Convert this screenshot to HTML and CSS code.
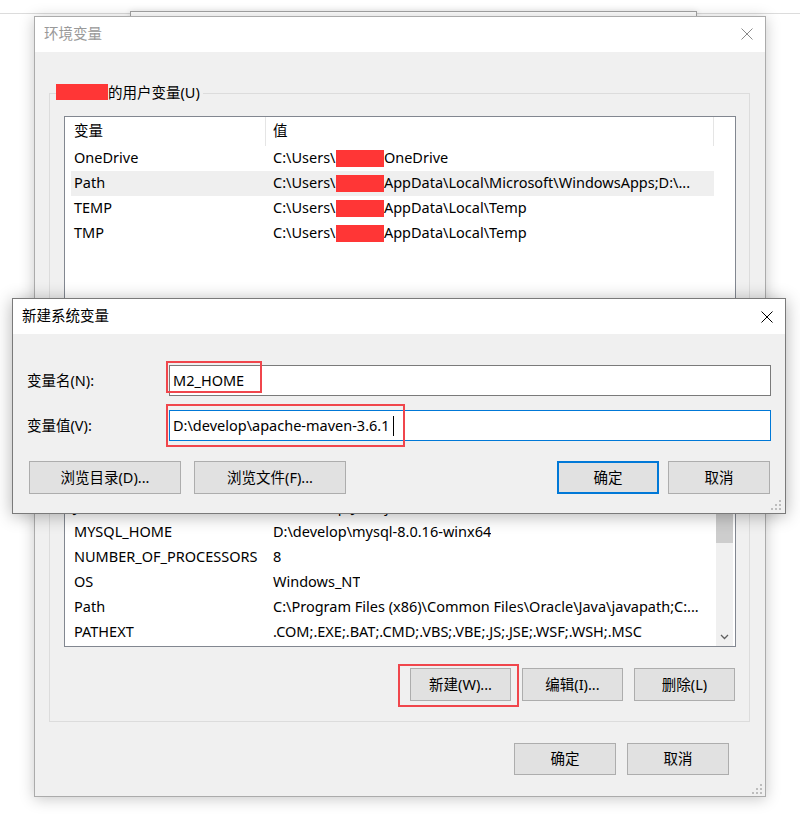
FILE: index.html
```html
<!DOCTYPE html>
<html lang="zh-CN">
<head>
<meta charset="utf-8">
<title>环境变量</title>
<link rel="stylesheet" href="styles.css">
</head>
<body>
<div class="desk-line"></div>
<div class="back-window"></div>

<section class="window main-win">
  <header class="titlebar">
    <span class="title">环境变量</span>
    <svg class="close" viewBox="0 0 12 12"><path d="M0.5 0.5L11.5 11.5M11.5 0.5L0.5 11.5" stroke="#8a8a8a" stroke-width="1" fill="none"/></svg>
  </header>
  <div class="win-body">
    <div class="group">
      <div class="legend"><span class="redact lg"></span>的用户变量(U)</div>
      <div class="list user-list">
        <div class="list-head"><div class="hcol1">变量</div><div class="hcol2">值</div></div>
        <div class="row"><div class="c1">OneDrive</div><div class="c2">C:\Users\<span class="redact sm"></span>\OneDrive</div></div>
        <div class="row sel"><div class="c1">Path</div><div class="c2">C:\Users\<span class="redact sm"></span>\AppData\Local\Microsoft\WindowsApps;D:\...</div></div>
        <div class="row"><div class="c1">TEMP</div><div class="c2">C:\Users\<span class="redact sm"></span>\AppData\Local\Temp</div></div>
        <div class="row"><div class="c1">TMP</div><div class="c2">C:\Users\<span class="redact sm"></span>\AppData\Local\Temp</div></div>
      </div>
      <div class="list sys-list">
        <div class="sys-main">
          <div class="sys-head"></div>
          <div class="row"><div class="c1">JAVA_HOME</div><div class="c2">D:\develop\Java\jdk1.8.0_201</div></div>
          <div class="row"><div class="c1">MYSQL_HOME</div><div class="c2">D:\develop\mysql-8.0.16-winx64</div></div>
          <div class="row"><div class="c1">NUMBER_OF_PROCESSORS</div><div class="c2">8</div></div>
          <div class="row"><div class="c1">OS</div><div class="c2">Windows_NT</div></div>
          <div class="row"><div class="c1">Path</div><div class="c2">C:\Program Files (x86)\Common Files\Oracle\Java\javapath;C:...</div></div>
          <div class="row"><div class="c1">PATHEXT</div><div class="c2">.COM;.EXE;.BAT;.CMD;.VBS;.VBE;.JS;.JSE;.WSF;.WSH;.MSC</div></div>
        </div>
        <div class="vscroll">
          <div class="thumb"></div>
          <div class="arrow-down"><svg width="9" height="6" viewBox="0 0 9 6"><path d="M1 1L4.5 4.5L8 1" stroke="#606060" stroke-width="1.3" fill="none"/></svg></div>
        </div>
      </div>
      <div class="btn-row">
        <span class="marked"><button class="btn">新建(W)...</button></span>
        <button class="btn">编辑(I)...</button>
        <button class="btn">删除(L)</button>
      </div>
    </div>
    <div class="footer-btns">
      <button class="btn foot">确定</button>
      <button class="btn foot">取消</button>
    </div>
    <svg class="grip main-grip" viewBox="0 0 10 10"><rect x="8" y="0" width="2" height="2"/><rect x="4" y="4" width="2" height="2"/><rect x="8" y="4" width="2" height="2"/><rect x="0" y="8" width="2" height="2"/><rect x="4" y="8" width="2" height="2"/><rect x="8" y="8" width="2" height="2"/></svg>
  </div>
</section>

<section class="window dialog">
  <header class="titlebar">
    <span class="title">新建系统变量</span>
    <svg class="close" viewBox="0 0 12 12"><path d="M0.5 0.5L11.5 11.5M11.5 0.5L0.5 11.5" stroke="#000" stroke-width="1" fill="none"/></svg>
  </header>
  <div class="dlg-body">
    <div class="field">
      <label>变量名(N):</label>
      <div class="input">M2_HOME<span class="mark mark1"></span></div>
    </div>
    <div class="field">
      <label>变量值(V):</label>
      <div class="input focus">D:\develop\apache-maven-3.6.1<span class="caret"></span><span class="mark mark2"></span></div>
    </div>
    <div class="dlg-btns">
      <button class="btn wide">浏览目录(D)...</button>
      <button class="btn wide">浏览文件(F)...</button>
      <span class="spacer"></span>
      <button class="btn dlg default">确定</button>
      <button class="btn dlg">取消</button>
    </div>
    <svg class="grip dlg-grip" viewBox="0 0 10 10"><rect x="8" y="0" width="2" height="2"/><rect x="4" y="4" width="2" height="2"/><rect x="8" y="4" width="2" height="2"/><rect x="0" y="8" width="2" height="2"/><rect x="4" y="8" width="2" height="2"/><rect x="8" y="8" width="2" height="2"/></svg>
  </div>
</section>
</body>
</html>
```
FILE: styles.css
```css
*, *::before, *::after { box-sizing: border-box; }
html, body { margin: 0; padding: 0; }
body {
  width: 800px;
  height: 814px;
  position: relative;
  overflow: hidden;
  background: #fff;
  font-family: "Noto Sans", "Noto Sans CJK SC", sans-serif;
  font-size: 14.5px;
  color: #000;
}
.desk-line {
  position: absolute;
  left: 0; right: 0; top: 13px;
  height: 1px;
  background: #dcdcdc;
}
.back-window {
  position: absolute;
  left: 130px; top: 11px;
  width: 567px; height: 60px;
  background: #fff;
  border: 1px solid #a3a3a3;
  box-shadow: 0 0 6px rgba(0,0,0,0.12);
}
.window {
  position: absolute;
  display: flex;
  flex-direction: column;
  background: #f0f0f0;
}
.main-win {
  left: 34px; top: 16px;
  width: 732px; height: 781px;
  border: 1px solid #ababab;
  box-shadow: 0 2px 14px rgba(0,0,0,0.22);
}
.titlebar {
  flex: none;
  height: 35px;
  background: #fff;
  display: flex;
  align-items: center;
  justify-content: space-between;
  padding-left: 9px;
  line-height: 20px;
}
.title { padding-bottom: 3px; }
.main-win .titlebar { color: #999; }
.close { width: 12px; height: 12px; margin-right: 12px; }
.main-win .close { margin-top: -2px; }

.win-body {
  flex: 1;
  position: relative;
  display: flex;
  flex-direction: column;
  padding: 41px 15px 20px 14px;
}
.group {
  border: 1px solid #dcdcdc;
  padding: 0 13px 20px 14px;
  display: flex;
  flex-direction: column;
}
.legend {
  align-self: flex-start;
  display: flex;
  align-items: center;
  height: 18px;
  line-height: 18px;
  margin: -10px 0 0 -8px;
  padding: 0 3px 2px 0;
  background: #f0f0f0;
}
.redact { display: inline-block; background: #ff3636; }
.redact.lg { width: 52px; height: 16px; }
.redact.sm {
  width: 48px; height: 17px;
  position: relative;
  margin-right: -5px;
  vertical-align: -4px;
}

.list { background: #fff; border: 1px solid #828790; }
.user-list { margin-top: 14px; height: 320px; }
.list-head { display: flex; height: 29px; }
.hcol1, .hcol2 {
  display: flex;
  align-items: center;
  border-right: 1px solid #e5e5e5;
  padding-bottom: 4px;
}
.hcol1 { width: 201px; padding-left: 9px; }
.hcol2 { width: 448px; padding-left: 7px; }
.row {
  display: flex;
  align-items: center;
  height: 25px;
  width: 643px;
  margin-left: 6px;
  padding-bottom: 3px;
  white-space: nowrap;
}
.row.sel { background: #efefef; }
.c1 { width: 195px; flex: none; padding-left: 3px; }
.c2 { padding-left: 7px; overflow: hidden; }

.sys-list { margin-top: 34px; height: 177px; display: flex; }
.sys-main { flex: 1; overflow: hidden; }
.sys-head { height: 24px; }
.vscroll {
  width: 17px;
  flex: none;
  margin-right: 2px;
  background: #f0f0f0;
  display: flex;
  flex-direction: column;
}
.thumb { margin-top: 17px; height: 55px; background: #cdcdcd; }
.arrow-down {
  margin-top: auto;
  height: 18px;
  display: flex;
  align-items: center;
  justify-content: center;
}

.btn {
  font-family: inherit;
  font-size: inherit;
  color: #000;
  background: #e1e1e1;
  border: 1px solid #adadad;
  padding: 0 0 2px 0;
  margin: 0;
  display: flex;
  align-items: center;
  justify-content: center;
  line-height: 20px;
}
.btn-row {
  display: flex;
  justify-content: flex-end;
  gap: 11px;
  margin-top: 21px;
  padding-right: 1px;
}
.btn-row .btn { width: 101px; height: 33px; }
.marked { position: relative; display: flex; }
.marked::after {
  content: "";
  position: absolute;
  left: -12px; top: -4px;
  width: 121px; height: 43px;
  border: 2px solid #f0464c;
}
.footer-btns {
  display: flex;
  justify-content: flex-end;
  gap: 11px;
  margin-top: 21px;
  padding-right: 21px;
}
.btn.foot { width: 102px; height: 32px; }
.grip { position: absolute; width: 10px; height: 10px; fill: #bdbdbd; }
.main-grip { right: 3px; bottom: 2px; }

.dialog {
  left: 12px; top: 298px;
  width: 774px; height: 216px;
  border: 1px solid #7a7a7a;
  box-shadow: 0 2px 16px rgba(0,0,0,0.3);
  z-index: 2;
}
.dialog .titlebar { color: #000; }
.dlg-body {
  flex: 1;
  position: relative;
  display: flex;
  flex-direction: column;
  padding: 31px 14px 19px 14px;
}
.field { display: flex; align-items: center; height: 31px; }
.field + .field { margin-top: 14px; }
.field label { width: 142px; flex: none; padding-bottom: 3px; }
.input {
  flex: 1;
  height: 31px;
  position: relative;
  display: flex;
  align-items: center;
  padding: 0 0 2px 3px;
  background: #fff;
  border: 1px solid #7a7a7a;
  white-space: nowrap;
}
.input.focus { border-color: #0078d7; }
.caret { width: 1px; height: 20px; background: #000; margin: 2px 0 0 3px; }
.mark { position: absolute; border: 2px solid #f0464c; }
.mark1 { left: -4px; top: -5px; width: 96px; height: 32px; }
.mark2 { left: -4px; top: -7px; width: 239px; height: 43px; }
.dlg-btns {
  display: flex;
  margin-top: 20px;
  padding: 0 1px 0 2px;
  gap: 13px;
}
.btn.wide { width: 152px; height: 33px; }
.spacer { flex: 1; }
.btn.dlg { width: 102px; height: 33px; }
.btn.default { border: 2px solid #0078d7; margin-right: -4px; }
.dlg-grip { right: 4px; bottom: 3px; }
```
